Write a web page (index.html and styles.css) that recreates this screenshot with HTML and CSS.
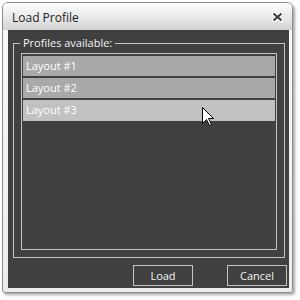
FILE: index.html
```html
<!DOCTYPE html>
<html>
<head>
<meta charset="utf-8">
<link rel="stylesheet" href="styles.css">
</head>
<body>
<div class="window">
  <div class="titlebar">
    <span class="title">Load Profile</span>
    <svg class="close" width="11" height="10" viewBox="0 0 11 10">
      <path d="M1.5 1.5 L9.5 8.5 M9.5 1.5 L1.5 8.5" stroke="#ffffff" stroke-width="4" stroke-linecap="round"/>
      <path d="M1.5 1.5 L9.5 8.5 M9.5 1.5 L1.5 8.5" stroke="#3a3a3a" stroke-width="2"/>
    </svg>
  </div>
  <div class="content">
    <fieldset class="group">
      <legend class="legend">Profiles available:</legend>
      <div class="list">
        <div class="item">Layout #1</div>
        <div class="item">Layout #2</div>
        <div class="item selected">Layout #3</div>
      </div>
    </fieldset>
    <div class="buttons">
      <button class="btn">Load</button>
      <button class="btn">Cancel</button>
    </div>
  </div>
</div>
<svg class="cursor" width="14" height="20" viewBox="0 0 14 20">
  <path d="M0.5 0.5 L0.5 16.5 L4.5 12.5 L7.5 18.5 L9.5 17.5 L6.5 11.5 L11.5 11.5 Z" fill="#ffffff" stroke="#000000" stroke-width="1" stroke-linejoin="miter"/>
</svg>
</body>
</html>
```
FILE: styles.css
```css
html, body {
  margin: 0;
  padding: 0;
  background: #ffffff;
  width: 300px;
  height: 300px;
  overflow: hidden;
  font-family: "Open Sans", "Noto Sans", sans-serif;
}
.window {
  position: relative;
  margin: 2px 0 0 2px;
  width: 289px;
  height: 289px;
  border: 1px solid #8c8c8c;
  border-radius: 6px 6px 3px 3px;
  background: linear-gradient(#fbfbfb, #ececec);
  box-shadow: 2px 2px 3px rgba(0,0,0,0.35);
  display: flex;
  flex-direction: column;
}
.titlebar {
  height: 27px;
  display: flex;
  align-items: center;
  justify-content: space-between;
  padding: 0 9px 0 9px;
  background: linear-gradient(#fdfdfd, #e6e6e6 60%, #d2d2d2);
  border-radius: 5px 5px 0 0;
}
.title {
  font-size: 12px;
  color: #1e1e1e;
  padding-top: 1px;
}
.close {
  display: block;
  margin-top: 1px;
}
.content {
  flex: 1;
  margin: 0 3px 4px 5px;
  background: #404040;
  border: 0;
  display: flex;
  flex-direction: column;
  padding: 0 3px 2px 5px;
}
.group {
  margin: 5px 1px 0 0;
  padding: 2px 7px 7px 7px;
  border: 1px solid #c4c4c4;
  min-width: 0;
  flex: 1;
  display: flex;
  flex-direction: column;
}
.legend {
  padding: 0 3px;
  margin-left: -1px;
  font-size: 11px;
  line-height: 16px;
  color: #f4f4f4;
}
.list {
  flex: 1;
  border: 1px solid #c4c4c4;
  padding: 2px 1px;
  display: flex;
  flex-direction: column;
  gap: 2px;
}
.item {
  height: 20px;
  line-height: 20px;
  background: #a9a9a9;
  color: #ffffff;
  font-size: 11px;
  padding-left: 3px;
}
.item.selected {
  background: #c1c1c1;
  height: 21px;
}
.buttons {
  display: flex;
  justify-content: flex-end;
  gap: 34px;
  margin-top: 7px;
  margin-right: -1px;
}
.btn {
  width: 60px;
  height: 21px;
  background: transparent;
  border: 1px solid #c4c4c4;
  color: #f2f2f2;
  font-family: "Open Sans", "Noto Sans", sans-serif;
  font-size: 11px;
  padding: 0;
  margin: 0;
}
.cursor {
  position: absolute;
  left: 202px;
  top: 107px;
}
```
